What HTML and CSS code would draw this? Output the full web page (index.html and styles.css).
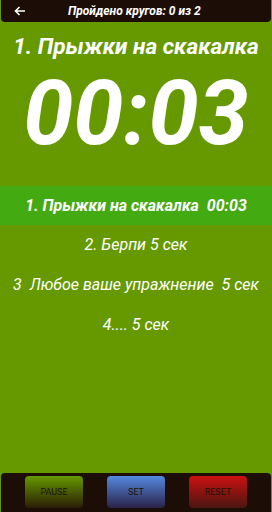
FILE: index.html
```html
<!DOCTYPE html>
<html lang="ru">
<head>
<meta charset="UTF-8">
<meta name="viewport" content="width=device-width, initial-scale=1.0">
<title>Таймер</title>
<link rel="stylesheet" href="styles.css">
</head>
<body>

<div class="topbar">
    <svg class="back" width="12" height="10" viewBox="0 0 12 10">
        <path d="M11 5H1.5M5.5 1L1.5 5l4 4" fill="none" stroke="#fff" stroke-width="1.6"/>
    </svg>
    <span class="rounds">Пройдено кругов: 0 из 2</span>
</div>

<div class="current">1. Прыжки на скакалка</div>
<div class="timer">00:03</div>

<div class="list">
    <div class="row active">1. Прыжки на скакалка&nbsp; 00:03</div>
    <div class="row">2. Берпи 5 сек</div>
    <div class="row">3&nbsp; Любое ваше упражнение&nbsp; 5 сек</div>
    <div class="row">4.... 5 сек</div>
</div>

<div class="bottombar">
    <button class="btn pause">PAUSE</button>
    <button class="btn set">SET</button>
    <button class="btn reset">RESET</button>
</div>

</body>
</html>
```

FILE: styles.css
```css
body {
    margin: 0;
    width: 272px;
    height: 512px;
    background-color: #669900;
    font-family: Roboto, "Liberation Sans", sans-serif;
    color: #fff;
    display: flex;
    flex-direction: column;
    overflow: hidden;
}

.topbar {
    height: 22px;
    margin: 0 1px;
    background-color: #1c0d07;
    border-radius: 0 0 4px 4px;
    display: flex;
    align-items: center;
}

.back {
    margin-left: 13px;
}

.rounds {
    margin-left: 42px;
    font-size: 12px;
    font-weight: bold;
    font-style: italic;
}

.current {
    margin-top: 12px;
    font-size: 22.6px;
    line-height: 26px;
    font-weight: bold;
    font-style: italic;
    text-align: center;
}

.timer {
    margin-top: 4px;
    font-size: 90px;
    line-height: 100px;
    font-weight: bold;
    font-style: italic;
    text-align: center;
}

.list {
    margin-top: 22px;
}

.row {
    height: 40px;
    line-height: 40px;
    font-size: 16px;
    font-style: italic;
    text-align: center;
}

.row.active {
    height: 39px;
    line-height: 39px;
    background-color: #44aa11;
    font-weight: bold;
}

.bottombar {
    margin: auto 1px 0;
    height: 39px;
    background-color: #1c0d07;
    border-radius: 4px 4px 0 0;
    display: flex;
    justify-content: space-evenly;
    align-items: flex-start;
    padding-top: 3px;
    box-sizing: border-box;
}

.btn {
    width: 58px;
    height: 32px;
    border: none;
    border-radius: 4px;
    font-family: Roboto, "Liberation Sans", sans-serif;
    font-size: 9px;
    color: #1a1208;
    padding: 0;
}

.pause {
    background: linear-gradient(#669900, #2a1c06);
}

.set {
    background: linear-gradient(#5588e0, #2a2248);
}

.reset {
    background: linear-gradient(#cc1111, #4a1610);
}
```
